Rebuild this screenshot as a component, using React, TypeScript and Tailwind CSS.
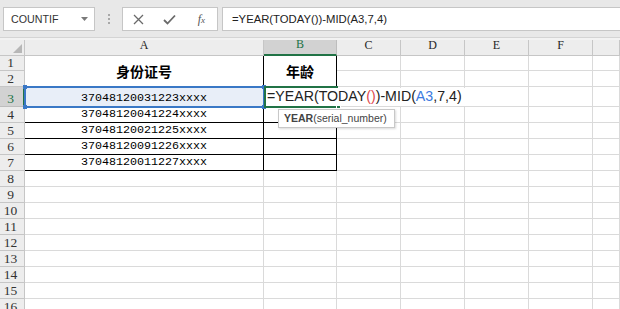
import React from "react"

const cols = ["A", "B", "C", "D", "E", "F", ""]

const ids = [
  "37048120031223xxxx",
  "37048120041224xxxx",
  "37048120021225xxxx",
  "37048120091226xxxx",
  "37048120011227xxxx",
]

const serif = { fontFamily: '"Liberation Serif", "DejaVu Serif", serif' }
const sans = { fontFamily: '"Liberation Sans", Arial, sans-serif' }

function ColHeader({ label }: { label: string }) {
  if (label === "B") {
    return (
      <div
        className="flex items-end justify-center pb-[1px] bg-[#d2d2d2] border-r border-[#bdbdbd] border-b-2 border-b-[#217346] text-[12px] text-[#217346]"
        style={serif}
      >
        {label}
      </div>
    )
  }
  return (
    <div
      className="flex items-end justify-center pb-[1px] bg-[#ededed] border-r border-b border-[#c6c6c6] text-[12px] text-[#262626]"
      style={serif}
    >
      {label}
    </div>
  )
}

function RowHeader({ n, active }: { n: number; active?: boolean }) {
  if (active) {
    return (
      <div
        className="flex items-end justify-center pb-[1px] pr-[2px] bg-[#d2d2d2] border-b border-[#bdbdbd] border-r-2 border-r-[#217346] text-[13.5px] text-[#217346] leading-none"
        style={serif}
      >
        {n}
      </div>
    )
  }
  return (
    <div
      className="flex items-end justify-center pb-[1px] pr-[3px] bg-[#ededed] border-r border-b border-[#c6c6c6] text-[13.5px] text-[#333] leading-none"
      style={serif}
    >
      {n}
    </div>
  )
}

function Blank() {
  return <div className="bg-white border-r border-b border-[#dadada]" />
}

function Toolbar() {
  return (
    <div className="h-[38px] bg-[#e8e8e8] border-b border-[#d4d4d4] flex items-start pt-[7px] pl-[3px]" style={sans}>
      <div className="w-[92px] h-[24px] bg-white border border-[#c6c6c6] flex items-center justify-between pl-[7px] pr-[6px]">
        <span className="text-[10.7px] text-[#333]">COUNTIF</span>
        <svg width="7" height="4" viewBox="0 0 7 4">
          <path d="M0 0 L7 0 L3.5 4 Z" fill="#7a7a7a" />
        </svg>
      </div>
      <div className="w-[27px] h-[24px] flex flex-col items-center justify-center gap-[2px]">
        <span className="w-[2px] h-[2px] bg-[#a8a8a8]" />
        <span className="w-[2px] h-[2px] bg-[#a8a8a8]" />
        <span className="w-[2px] h-[2px] bg-[#a8a8a8]" />
      </div>
      <div className="w-[96px] h-[24px] bg-white border border-[#c6c6c6] flex items-center">
        <div className="w-[32px] flex justify-center">
          <svg width="11" height="11" viewBox="0 0 11 11">
            <path d="M1 1 L10 10 M10 1 L1 10" stroke="#6a6a6a" strokeWidth="1.3" />
          </svg>
        </div>
        <div className="w-[32px] flex justify-center">
          <svg width="13" height="11" viewBox="0 0 13 11">
            <path d="M1 6 L4.5 9.5 L12 1.5" stroke="#6a6a6a" strokeWidth="1.8" fill="none" />
          </svg>
        </div>
        <div className="w-[32px] flex justify-center">
          <span className="text-[12px] italic text-[#555]" style={serif}>
            f<span className="text-[9px]">x</span>
          </span>
        </div>
      </div>
      <div className="ml-[4px] flex-1 h-[24px] bg-white border border-r-0 border-[#c6c6c6] flex items-center pl-[9px]">
        <span className="text-[11.3px] text-[#222]">=YEAR(TODAY())-MID(A3,7,4)</span>
      </div>
    </div>
  )
}

export default function App() {
  const rows: React.ReactNode[] = []

  // row 1 (with merged A1:A2, B1:B2)
  rows.push(<RowHeader key="r1" n={1} />)
  rows.push(
    <div
      key="a1"
      className="row-span-2 bg-white border-r border-b border-black flex items-center justify-center text-[14px] font-bold text-black"
      style={{ fontFamily: '"Noto Sans CJK SC", sans-serif' }}
    >
      身份证号
    </div>
  )
  rows.push(
    <div
      key="b1"
      className="row-span-2 bg-white border-r border-b border-black flex items-center justify-center text-[14px] font-bold text-black"
      style={{ fontFamily: '"Noto Sans CJK SC", sans-serif' }}
    >
      年龄
    </div>
  )
  for (let c = 0; c < 5; c++) rows.push(<Blank key={"r1c" + c} />)
  rows.push(<RowHeader key="r2" n={2} />)
  for (let c = 0; c < 5; c++) rows.push(<Blank key={"r2c" + c} />)

  // rows 3-7
  ids.forEach((id, i) => {
    const n = i + 3
    rows.push(<RowHeader key={"rh" + n} n={n} active={n === 3} />)
    rows.push(
      <div
        key={"a" + n}
        className={
          n === 3
            ? "bg-[#e8eef8] border-r border-b border-black flex items-end justify-center pb-[1px] text-[11.7px] text-black leading-none"
            : "bg-white border-r border-b border-black flex items-end justify-center pb-[1px] text-[11.7px] text-black leading-none"
        }
        style={{ fontFamily: '"Liberation Mono", monospace' }}
      >
        {id}
      </div>
    )
    rows.push(<div key={"b" + n} className="bg-white border-r border-b border-black" />)
    for (let c = 0; c < 5; c++) rows.push(<Blank key={"r" + n + "c" + c} />)
  })

  // rows 8-16
  for (let n = 8; n <= 16; n++) {
    rows.push(<RowHeader key={"rh" + n} n={n} />)
    for (let c = 0; c < 7; c++) rows.push(<Blank key={"r" + n + "c" + c} />)
  }

  return (
    <div className="w-[620px] h-[309px] overflow-hidden bg-white">
      <Toolbar />
      <div className="h-[2px] bg-[#f2f2f2]" />
      <div className="relative grid grid-cols-[25px_239px_73px_64px_64px_64px_64px_1fr] grid-rows-[16px_15px_16px_20px_repeat(13,16px)]">
        <div className="bg-[#ededed] border-r border-b border-[#c6c6c6] flex items-end justify-end p-[2px]">
          <svg width="9" height="9" viewBox="0 0 9 9">
            <path d="M9 0 L9 9 L0 9 Z" fill="#b7b7b7" />
          </svg>
        </div>
        {cols.map((c, i) => (
          <ColHeader key={"h" + i} label={c} />
        ))}
        {rows}

        {/* A3 selection */}
        <div className="absolute left-[24px] top-[46px] w-[241px] h-[22px] border-2 border-[#3a78c6] pointer-events-none">
          <span className="absolute -left-[3px] -top-[3px] w-[4px] h-[4px] bg-[#3a78c6]" />
          <span className="absolute -right-[3px] -top-[3px] w-[4px] h-[4px] bg-[#3a78c6]" />
          <span className="absolute -left-[3px] -bottom-[3px] w-[4px] h-[4px] bg-[#3a78c6]" />
          <span className="absolute -right-[3px] -bottom-[3px] w-[4px] h-[4px] bg-[#3a78c6]" />
        </div>

        {/* B3 editing cell */}
        <div className="absolute left-[264px] top-[46px] w-[74px] h-[22px] border-2 border-r-0 border-[#217346] pointer-events-none">
          <span className="absolute -right-[3px] -bottom-[3px] w-[5px] h-[5px] bg-[#217346] border border-white" />
        </div>
        <div
          className="absolute left-[266px] top-[48px] h-[18px] w-[200px] bg-white flex items-center pl-[1px] text-[14.2px] text-[#222] whitespace-nowrap"
          style={sans}
        >
          =YEAR(TODAY<span className="text-[#e0474c]">()</span>)-MID(<span className="text-[#3c7be0]">A3</span>,7,4)
        </div>

        {/* function tooltip */}
        <div
          className="absolute left-[278px] top-[69px] w-[117px] h-[19px] bg-white border border-[#c8c8c8] shadow-[1px_1px_2px_rgba(0,0,0,0.15)] flex items-center pl-[5px] text-[10.5px] text-[#444] whitespace-nowrap"
          style={sans}
        >
          <span className="font-bold">YEAR</span>(serial_number)
        </div>
      </div>
    </div>
  )
}
